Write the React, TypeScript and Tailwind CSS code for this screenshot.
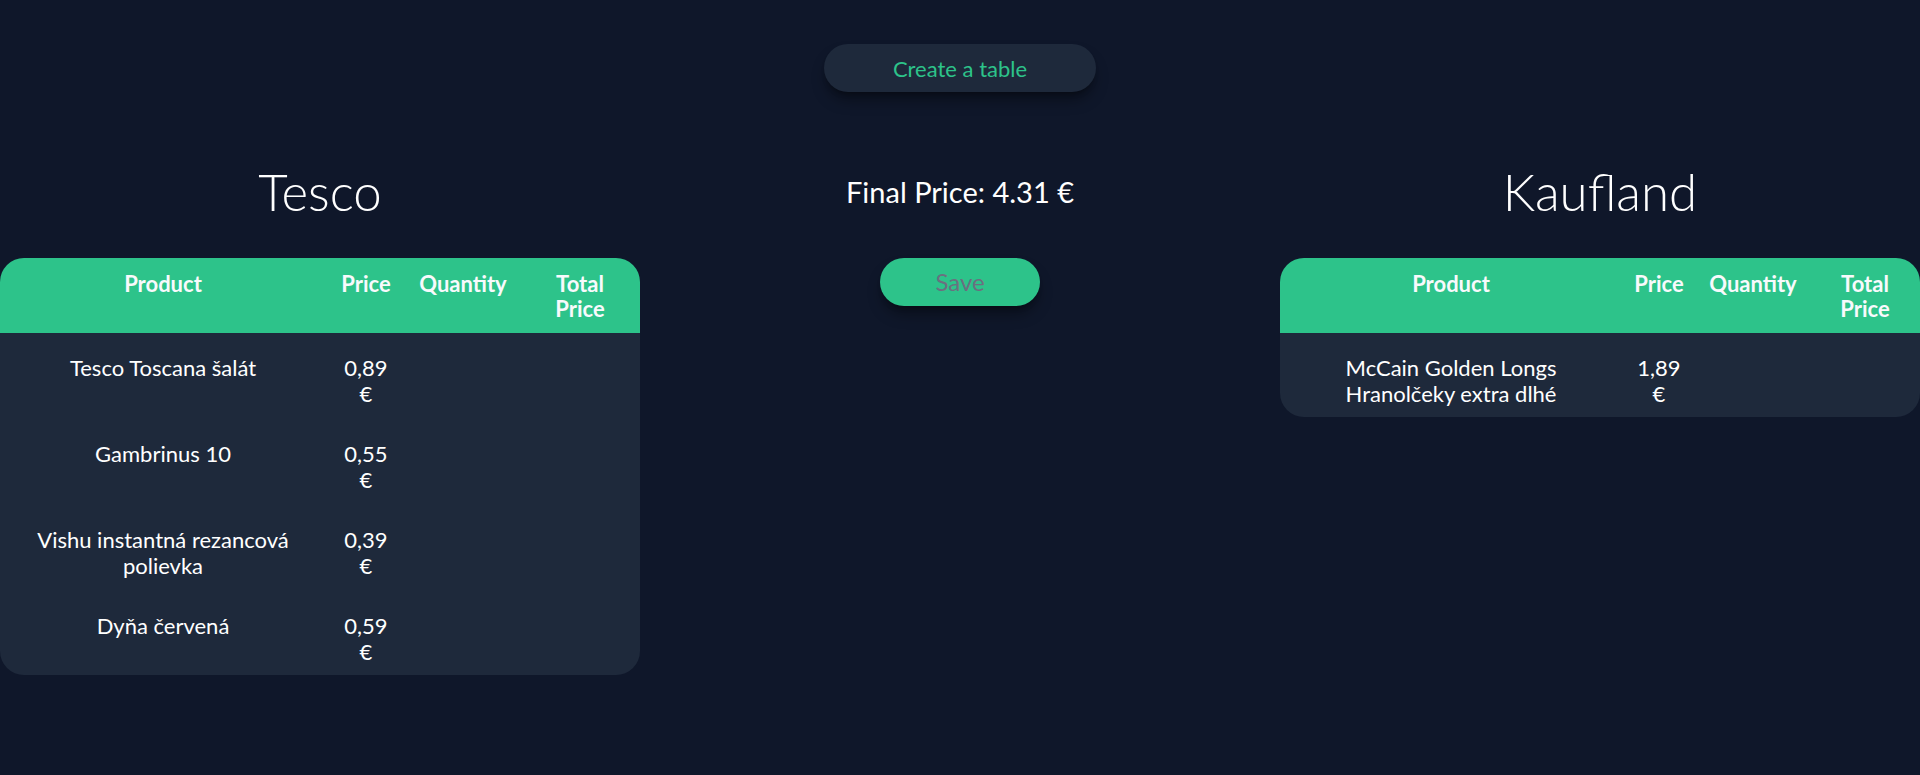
import React from 'react';

type Item = {
    name: string;
    price: string;
};

const tescoItems: Item[] = [
    { name: 'Tesco Toscana šalát', price: '0,89 €' },
    { name: 'Gambrinus 10', price: '0,55 €' },
    { name: 'Vishu instantná rezancová polievka', price: '0,39 €' },
    { name: 'Dyňa červená', price: '0,59 €' },
];

const kauflandItems: Item[] = [{ name: 'McCain Golden Longs Hranolčeky extra dlhé', price: '1,89 €' }];

type TableProps = {
    title: string;
    items: Item[];
    cols: string;
};

function StoreTable({ title, items, cols }: TableProps) {
    return (
        <div className="flex flex-col items-center w-full">
            <h1 className="text-[51px] leading-[48px] font-light text-white">{title}</h1>

            <div className="mt-[42px] w-full">
                {/* Header */}
                <div className={`grid ${cols} h-[75px] pt-[13px] bg-[#2dc38a] rounded-t-3xl text-[22px] leading-[25px] font-bold text-[#f8fafc]`}>
                    <div className="text-center">Product</div>
                    <div className="text-center">Price</div>
                    <div className="text-center">Quantity</div>
                    <div className="w-min mx-auto text-center">Total Price</div>
                </div>

                {/* Rows */}
                <div className="flex flex-col gap-[34px] pt-[22px] pb-[10px] bg-[#1e293b] rounded-b-3xl text-[22px] leading-[26px] text-white">
                    {items.map((item) => (
                        <div key={item.name} className={`grid ${cols} items-start min-h-[52px]`}>
                            <div className="px-[28px] text-center">{item.name}</div>
                            <div className="w-min mx-auto text-center">{item.price}</div>
                            <div />
                            <div />
                        </div>
                    ))}
                </div>
            </div>
        </div>
    );
}

export default function App() {
    return (
        <div className="min-h-[775px] bg-[#0f172a] font-['Lato',sans-serif]">
            <div className="flex justify-center pt-[44px]">
                <button className="w-[272px] h-[48px] rounded-full bg-[#1e293b] text-[22px] text-[#2dc38a] shadow-lg shadow-black/40">
                    Create a table
                </button>
            </div>

            <div className="grid grid-cols-3 mt-[76px]">
                <StoreTable title="Tesco" items={tescoItems} cols="grid-cols-[326px_80px_114px_1fr]" />

                <div className="flex flex-col items-center pt-[6px]">
                    <p className="text-[29px] leading-[36px] text-white">Final Price: 4.31 €</p>
                    <button className="mt-[48px] w-[160px] h-[48px] rounded-full bg-[#2dc38a] text-[24px] text-[#6b6f80] shadow-lg shadow-black/40">
                        Save
                    </button>
                </div>

                <StoreTable title="Kaufland" items={kauflandItems} cols="grid-cols-[342px_74px_114px_1fr]" />
            </div>
        </div>
    );
}
